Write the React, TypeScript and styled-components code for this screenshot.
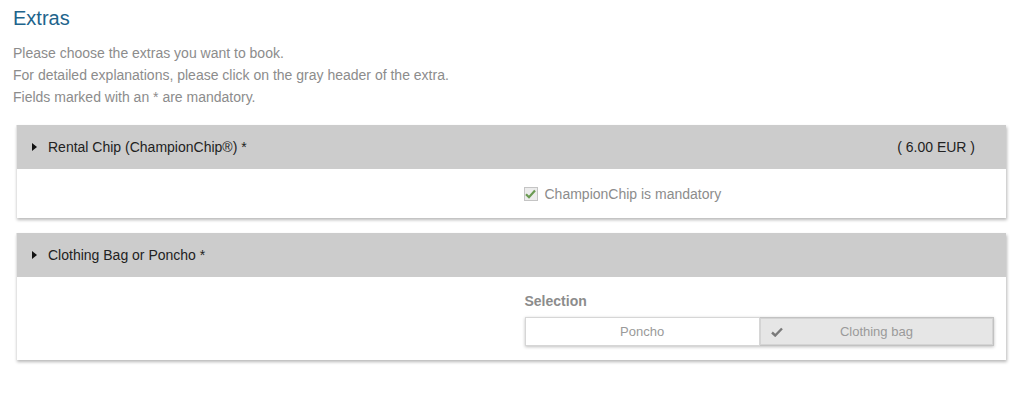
import styled, { createGlobalStyle } from "styled-components";

const GlobalStyle = createGlobalStyle`
  html, body {
    margin: 0;
    padding: 0;
    background: #ffffff;
    font-family: "Liberation Sans", Arial, sans-serif;
  }
`;

const Page = styled.div`
  padding: 5px 18px 20px 13px;
`;

const Title = styled.h2`
  margin: 0;
  font-size: 20px;
  line-height: 26px;
  font-weight: normal;
  color: #21648c;
`;

const Intro = styled.div`
  margin-top: 11px;
  font-size: 14px;
  line-height: 22px;
  color: #8c8c8c;
`;

const CardList = styled.div`
  margin: 17px 0 0 3px;
  display: flex;
  flex-direction: column;
  gap: 15px;
`;

const Card = styled.section`
  background: #fff;
  border-left: 1px solid #e4e4e4;
  box-shadow: 1px 2px 3px rgba(0, 0, 0, 0.28);
`;

const Header = styled.div`
  height: 44px;
  background: #cccccc;
  display: flex;
  align-items: center;
  padding: 0 31px 0 15px;
  font-size: 14px;
  color: #222;
  cursor: pointer;
`;

const Caret = styled.span`
  width: 0;
  height: 0;
  border-top: 4px solid transparent;
  border-bottom: 4px solid transparent;
  border-left: 5px solid #111;
  margin-right: 11px;
`;

const HeaderTitle = styled.span`
  flex: 1;
`;

const Price = styled.span`
  color: #222;
`;

const Body = styled.div<{ $padY: number }>`
  display: grid;
  grid-template-columns: 1fr 1fr;
  column-gap: 26px;
  padding: ${(p) => p.$padY}px 12px;
  min-height: ${(p) => (p.$padY ? 0 : 49)}px;
  box-sizing: border-box;
  align-items: center;
`;

const Right = styled.div`
  grid-column: 2;
`;

const CheckRow = styled.label`
  display: flex;
  align-items: center;
  font-size: 14px;
  color: #8c8c8c;
  margin-left: -1px;
`;

const CheckBox = styled.span`
  width: 12px;
  height: 12px;
  border: 1px solid #c4c4c4;
  background: #ececec;
  margin-right: 7px;
  display: flex;
  align-items: center;
  justify-content: center;
`;

const FieldLabel = styled.div`
  font-size: 14px;
  line-height: 20px;
  font-weight: bold;
  color: #8c8c8c;
  margin-bottom: 6px;
`;

const Segments = styled.div`
  display: flex;
  box-shadow: 0 1px 3px rgba(0, 0, 0, 0.25);
`;

const Segment = styled.button<{ $active?: boolean }>`
  flex: 1;
  position: relative;
  height: 29px;
  border: 1px solid ${(p) => (p.$active ? "#c2c2c2" : "#d6d6d6")};
  background: ${(p) => (p.$active ? "#e6e6e6" : "#ffffff")};
  box-shadow: ${(p) => (p.$active ? "inset 0 0 0 1px #d4d4d4" : "none")};
  font-family: "Liberation Sans", Arial, sans-serif;
  font-size: 13px;
  color: #9a9a9a;
  cursor: pointer;
  padding: 0;
  & + & {
    border-left: none;
  }
`;

const Tick = styled.span`
  position: absolute;
  left: 11px;
  top: 50%;
  transform: translateY(-50%);
  display: flex;
`;

const App = () => {
  return (
    <>
      <GlobalStyle />
      <Page>
        <Title>Extras</Title>
        <Intro>
          Please choose the extras you want to book.
          <br />
          For detailed explanations, please click on the gray header of the extra.
          <br />
          Fields marked with an * are mandatory.
        </Intro>
        <CardList>
          <Card>
            <Header>
              <Caret />
              <HeaderTitle>Rental Chip (ChampionChip®) *</HeaderTitle>
              <Price>( 6.00 EUR )</Price>
            </Header>
            <Body $padY={0}>
              <Right>
                <CheckRow>
                  <CheckBox>
                    <svg width="11" height="10" viewBox="0 0 11 10">
                      <path d="M1 5.2 L4 8.2 L10 1.5" fill="none" stroke="#6a9a52" strokeWidth="2.2" />
                    </svg>
                  </CheckBox>
                  ChampionChip is mandatory
                </CheckRow>
              </Right>
            </Body>
          </Card>
          <Card>
            <Header>
              <Caret />
              <HeaderTitle>Clothing Bag or Poncho *</HeaderTitle>
            </Header>
            <Body $padY={14}>
              <Right>
                <FieldLabel>Selection</FieldLabel>
                <Segments>
                  <Segment>Poncho</Segment>
                  <Segment $active>
                    <Tick>
                      <svg width="12" height="10" viewBox="0 0 12 10">
                        <path d="M1 5.5 L4.2 8.5 L11 1.5" fill="none" stroke="#7a7a7a" strokeWidth="2.4" />
                      </svg>
                    </Tick>
                    Clothing bag
                  </Segment>
                </Segments>
              </Right>
            </Body>
          </Card>
        </CardList>
      </Page>
    </>
  );
};

export default App;
